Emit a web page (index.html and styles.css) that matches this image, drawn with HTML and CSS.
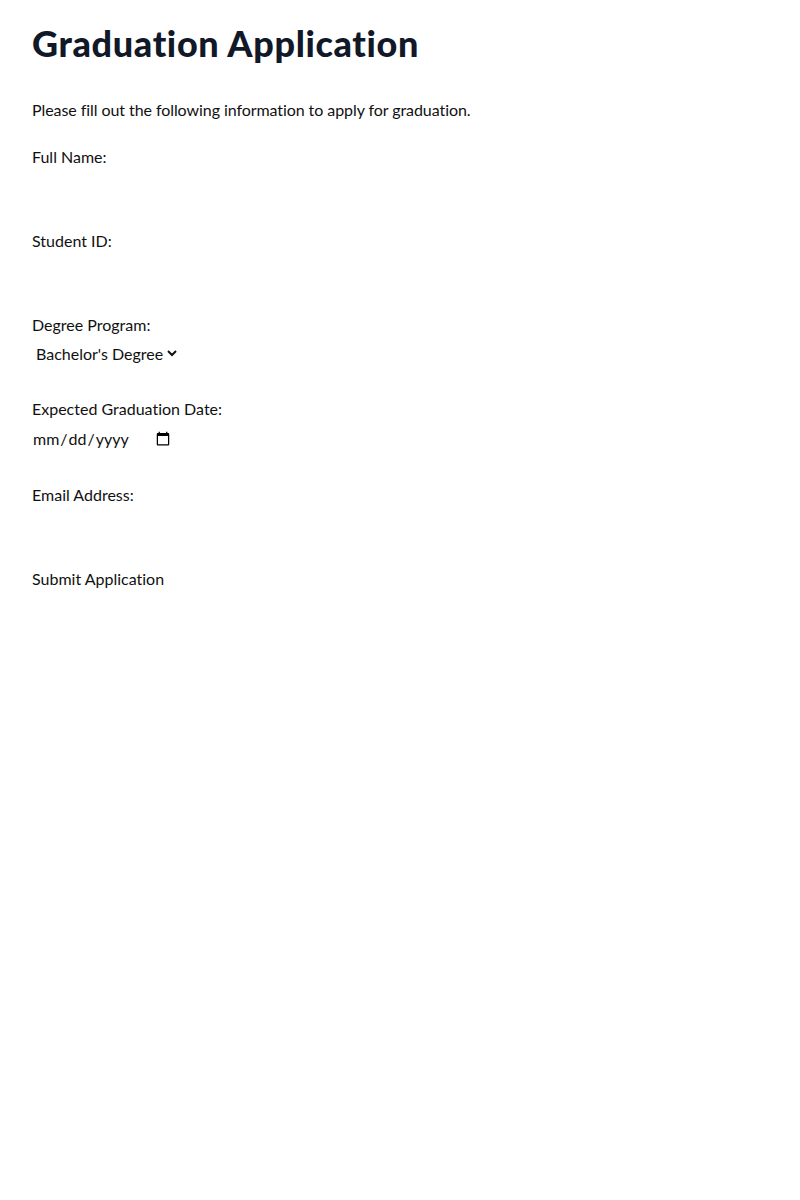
FILE: index.html
```html
<!DOCTYPE html>
<html lang="en">
<head>
<meta charset="utf-8">
<title>Graduation Application</title>
<link rel="stylesheet" href="styles.css">
</head>
<body>
<main class="page">
  <h1 class="title">Graduation Application</h1>
  <p class="intro">Please fill out the following information to apply for graduation.</p>
  <form class="form">
    <div class="field">
      <label class="label" for="name">Full Name:</label>
      <input class="input" type="text" id="name">
    </div>
    <div class="field">
      <label class="label" for="sid">Student ID:</label>
      <input class="input" type="text" id="sid">
    </div>
    <div class="field">
      <label class="label" for="degree">Degree Program:</label>
      <select class="select" id="degree">
        <option>Bachelor's Degree</option>
        <option>Master's Degree</option>
        <option>Doctorate</option>
      </select>
    </div>
    <div class="field">
      <label class="label" for="date">Expected Graduation Date:</label>
      <input class="input date" type="date" id="date">
    </div>
    <div class="field">
      <label class="label" for="email">Email Address:</label>
      <input class="input" type="email" id="email">
    </div>
    <button class="submit" type="submit">Submit Application</button>
  </form>
</main>
</body>
</html>
```

FILE: styles.css
```css
* { box-sizing: border-box; }
html, body { margin: 0; padding: 0; background: #fff; }
body {
  font-family: Lato, "Liberation Sans", sans-serif;
  font-size: 16px;
  line-height: 24px;
  color: #111111;
  font-variant-ligatures: none;
}
.page { padding: 23px 32px; }
.title {
  margin: 0 0 35px;
  font-size: 36px;
  line-height: 40px;
  font-weight: 900;
  letter-spacing: 0.65px;
  color: #111827;
}
.intro { margin: 0 0 23px; letter-spacing: -0.07px; }
.form { display: block; }
.field { margin-bottom: 32px; }
.label { display: block; margin-bottom: 4px; }
.input, .select, .submit {
  font: inherit;
  color: inherit;
  border: 0;
  background: transparent;
  padding: 0;
  margin: 0;
  outline: none;
  font-variant-ligatures: none;
}
.input { display: block; height: 24px; }
.select { display: block; height: 24px; }
.date { width: 141px; height: 26px; padding-top: 1px; }
.submit { display: block; cursor: pointer; }
```
